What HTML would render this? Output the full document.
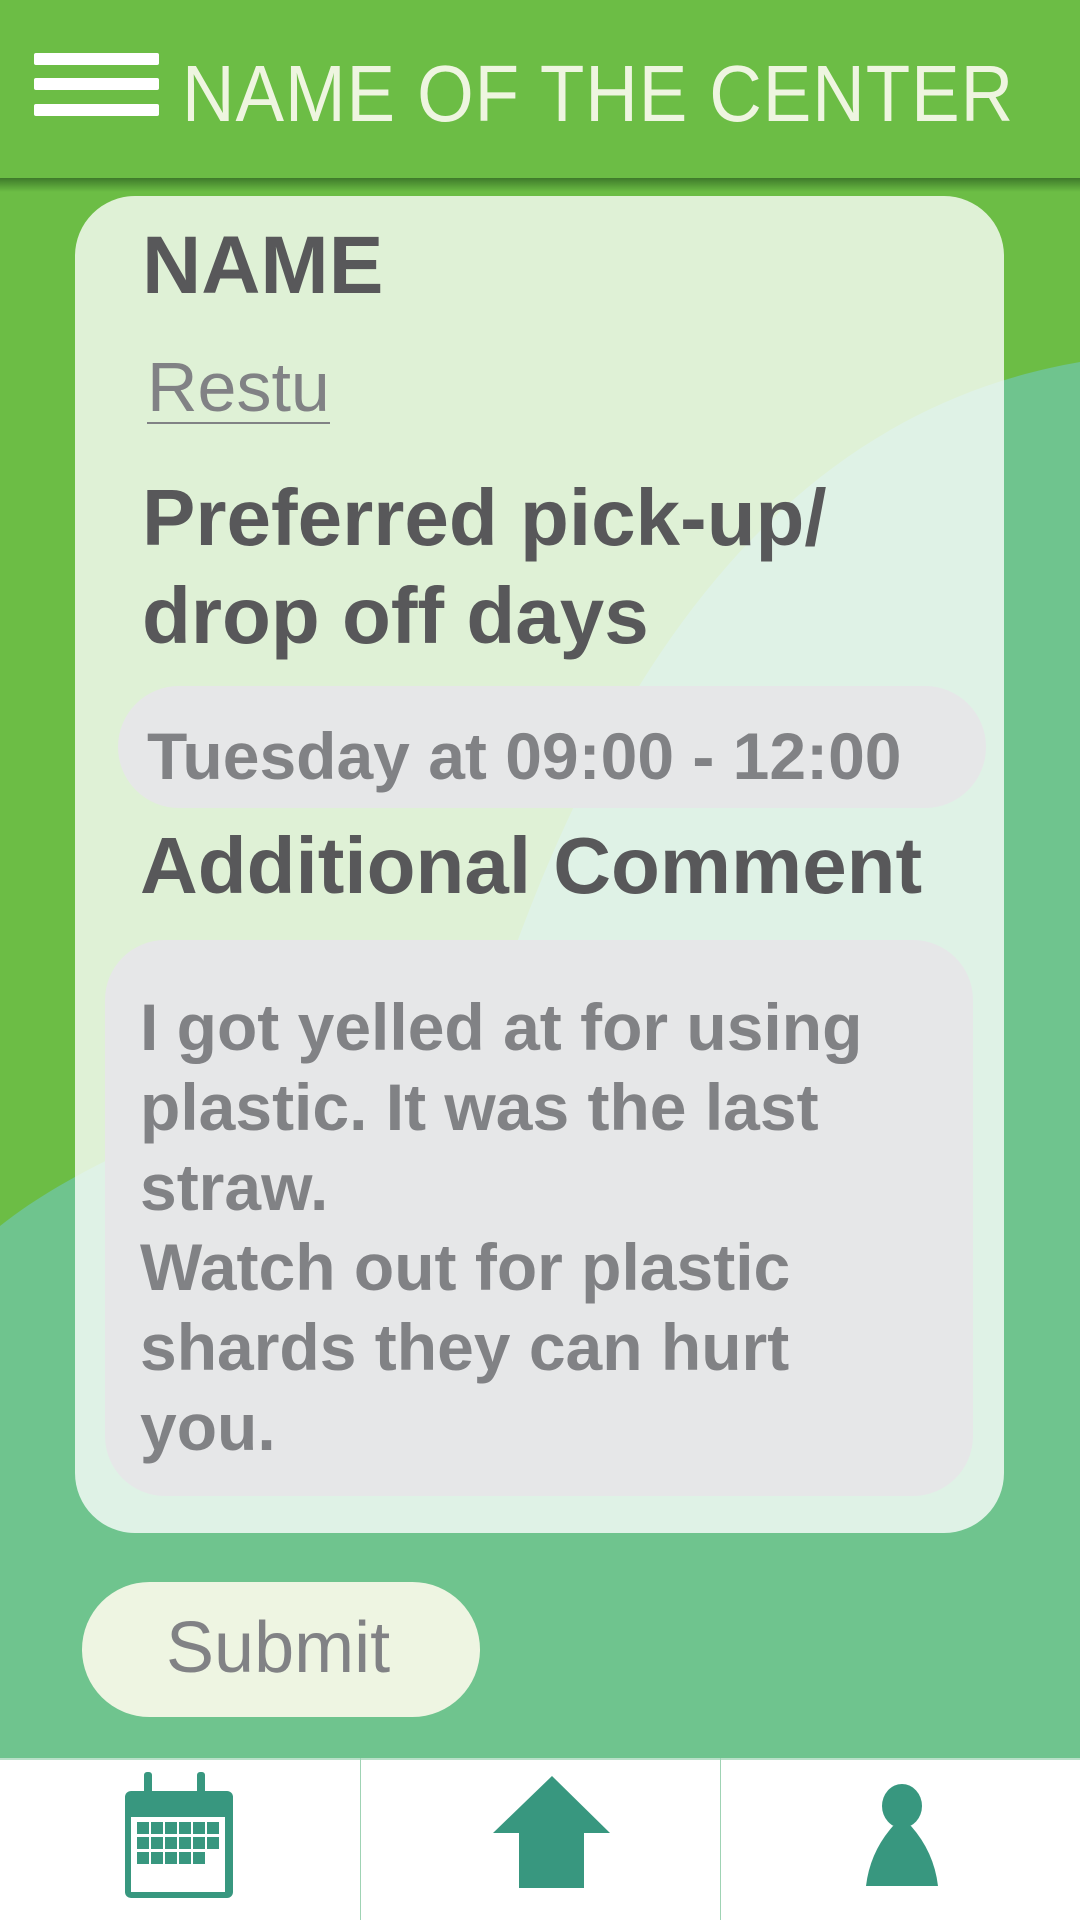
<!DOCTYPE html>
<html><head><meta charset="utf-8"><style>
*{margin:0;padding:0;box-sizing:border-box}
body{width:1080px;height:1920px;position:relative;overflow:hidden;background:#fff;font-family:"Liberation Sans",sans-serif}
.abs{position:absolute}
.t{position:absolute;white-space:nowrap;line-height:1}
</style></head><body>
<svg class="abs" style="left:0;top:0" width="1080" height="1760">
<rect width="1080" height="1760" fill="#6cbd45"/>
<path d="M1080,362 C800,410 620,640 500,990 C330,1080 120,1130 0,1226 L0,1760 L1080,1760 Z" fill="#6fc48e"/>
</svg>
<div class="abs" style="left:0;top:0;width:1080px;height:178px;background:#6cbd45"></div>
<div class="abs" style="left:0;top:178px;width:1080px;height:14px;background:linear-gradient(#3e7a2a,#6cbd45)"></div>
<div class="abs" style="left:34px;top:53px;width:125px;height:12px;background:#fff;border-radius:2px"></div>
<div class="abs" style="left:34px;top:78px;width:125px;height:12px;background:#fff;border-radius:2px"></div>
<div class="abs" style="left:34px;top:104px;width:125px;height:12px;background:#fff;border-radius:2px"></div>
<div class="t" style="left:182px;top:54px;font-size:80px;color:#eef5e0;letter-spacing:1px;transform:scaleX(0.91);transform-origin:left">NAME OF THE CENTER</div>

<div class="abs" style="left:75px;top:196px;width:929px;height:1337px;border-radius:60px;background:rgba(255,255,255,0.78)"></div>
<div class="t" style="left:142px;top:225px;font-size:82px;font-weight:bold;color:#58585a">NAME</div>
<div class="t" style="left:147px;top:352px;font-size:70px;color:#818285;border-bottom:2px solid #818285;padding-bottom:0px">Restu</div>
<div class="t" style="left:142px;top:469px;font-size:80px;font-weight:bold;color:#58585a;line-height:98px;white-space:normal;width:800px">Preferred pick-up/<br>drop off days</div>
<div class="abs" style="left:118px;top:686px;width:868px;height:122px;border-radius:61px;background:#e6e7e8"></div>
<div class="t" style="left:147px;top:723px;font-size:66px;font-weight:bold;color:#818285">Tuesday at 09:00 - 12:00</div>
<div class="t" style="left:140px;top:826px;font-size:80px;font-weight:bold;color:#58585a">Additional Comment</div>
<div class="abs" style="left:105px;top:940px;width:868px;height:556px;border-radius:60px;background:#e6e7e8"></div>
<div class="t" style="left:140px;top:987px;font-size:66px;font-weight:bold;color:#818285;line-height:80px">I got yelled at for using<br>plastic. It was the last<br>straw.<br>Watch out for plastic<br>shards they can hurt<br>you.</div>

<div class="abs" style="left:82px;top:1582px;width:398px;height:135px;border-radius:68px;background:#eef5e2"></div>
<div class="t" style="left:166px;top:1612px;font-size:72px;color:#818285">Submit</div>

<div class="abs" style="left:0;top:1758px;width:1080px;height:2px;background:#b9e0c8"></div>
<div class="abs" style="left:360px;top:1758px;width:1px;height:162px;background:#9fd3b4"></div>
<div class="abs" style="left:720px;top:1758px;width:1px;height:162px;background:#9fd3b4"></div>
<svg class="abs" style="left:0;top:1760px" width="1080" height="160">
<g fill="#38977f">
<rect x="125" y="31" width="108" height="107" rx="6"/>
<rect x="131" y="57" width="94" height="75" fill="#fff"/>
<rect x="144" y="12" width="8" height="38" rx="3"/>
<rect x="197" y="12" width="8" height="38" rx="3"/>
<g>
<rect x="137" y="62" width="12" height="12"/><rect x="151" y="62" width="12" height="12"/><rect x="165" y="62" width="12" height="12"/><rect x="179" y="62" width="12" height="12"/><rect x="193" y="62" width="12" height="12"/><rect x="207" y="62" width="12" height="12"/>
<rect x="137" y="77" width="12" height="12"/><rect x="151" y="77" width="12" height="12"/><rect x="165" y="77" width="12" height="12"/><rect x="179" y="77" width="12" height="12"/><rect x="193" y="77" width="12" height="12"/><rect x="207" y="77" width="12" height="12"/>
<rect x="137" y="92" width="12" height="12"/><rect x="151" y="92" width="12" height="12"/><rect x="165" y="92" width="12" height="12"/><rect x="179" y="92" width="12" height="12"/><rect x="193" y="92" width="12" height="12"/>
</g>
<path d="M552,16 L610,73 L493,73 Z"/>
<rect x="519" y="73" width="65" height="55"/>
<ellipse cx="902" cy="46" rx="20" ry="22"/>
<path d="M893,66 Q870,92 866,126 L938,126 Q934,92 911,66 Z"/>
</g>
</svg>
</body></html>
